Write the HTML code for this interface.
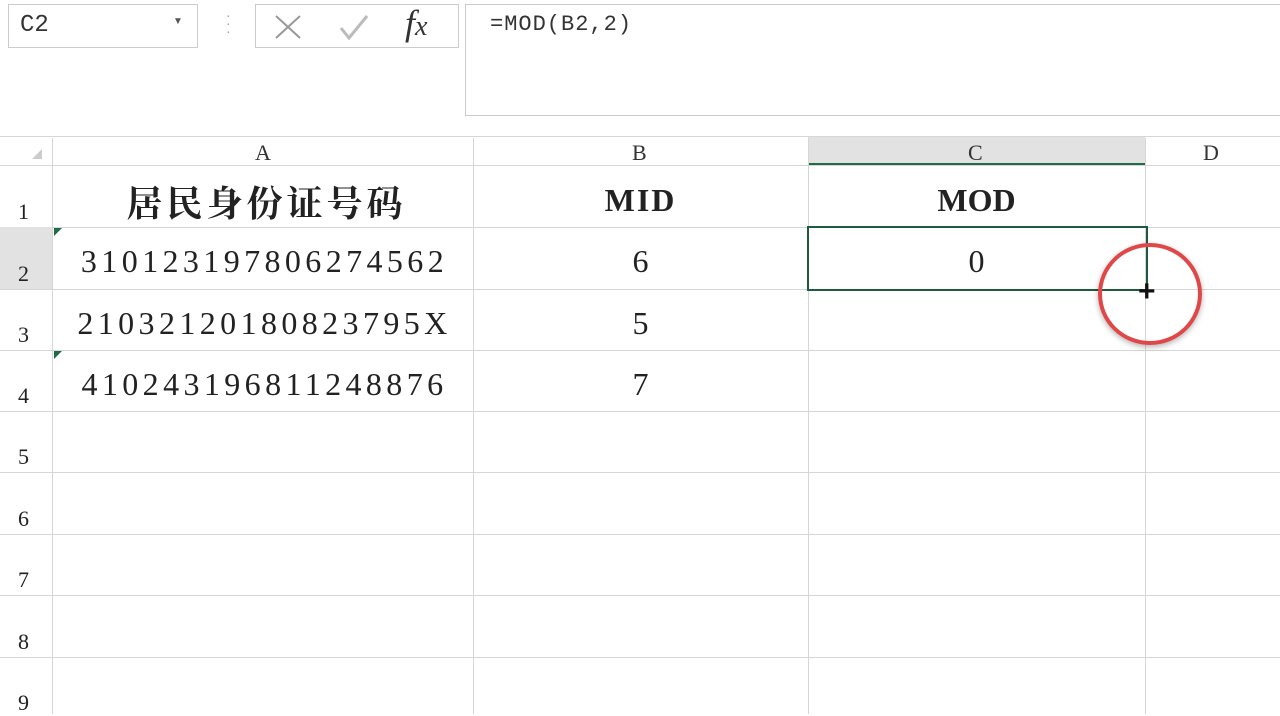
<!DOCTYPE html>
<html><head><meta charset="utf-8"><style>
body{margin:0;width:1280px;height:714px;overflow:hidden;background:#fff;position:relative;font-family:"Liberation Serif","Noto Serif CJK SC",serif;}
.a{position:absolute}
.hl{position:absolute;left:0;width:1280px;height:1px;background:#d6d6d6}
.vl{position:absolute;top:138px;height:576px;width:1px;background:#d6d6d6}
.rn{position:absolute;left:18px;font-size:22px;color:#222}
.c{position:absolute;font-size:32px;color:#222;text-align:center}
.n{letter-spacing:4.4px}
</style></head><body>
<div class="a" style="left:8px;top:4px;width:188px;height:42px;border:1px solid #ccc"></div>
<div class="a" style="left:20px;top:12px;font-family:'Liberation Mono',monospace;font-size:24px;color:#333">C2</div>
<div class="a" style="left:173px;top:16px;font-size:10px;color:#555">▼</div>
<div class="a" style="left:226px;top:14px;font-size:14px;color:#999;line-height:8px">·<br>·<br>·</div>
<div class="a" style="left:255px;top:4px;width:202px;height:42px;border:1px solid #ccc"></div>
<svg class="a" style="left:270px;top:12px" width="40" height="30"><path d="M6 4L30 26M30 4L6 26" stroke="#999" stroke-width="2"/></svg>
<svg class="a" style="left:335px;top:12px" width="40" height="30"><path d="M6 16L14 26L32 4" stroke="#bbb" stroke-width="3" fill="none"/></svg>
<div class="a" style="left:405px;top:2px;font-size:36px;font-style:italic;color:#333">f<span style="font-size:28px">x</span></div>
<div class="a" style="left:465px;top:4px;width:830px;height:110px;border:1px solid #ccc"></div>
<div class="a" style="left:490px;top:12px;font-family:'Liberation Mono',monospace;font-size:22px;color:#333;letter-spacing:1px">=MOD(B2,2)</div>
<div class="a" style="left:808px;top:136px;width:337px;height:29px;background:#e2e2e2"></div>
<div class="a" style="left:808px;top:163px;width:337px;height:2px;background:#1e6b45"></div>
<div class="hl" style="top:136px"></div>
<div class="hl" style="top:165px"></div>
<div class="hl" style="top:227px"></div><div class="hl" style="top:289px"></div><div class="hl" style="top:350px"></div><div class="hl" style="top:411px"></div><div class="hl" style="top:472px"></div><div class="hl" style="top:534px"></div><div class="hl" style="top:595px"></div><div class="hl" style="top:657px"></div>
<div class="vl" style="left:52px"></div><div class="vl" style="left:473px"></div><div class="vl" style="left:808px"></div><div class="vl" style="left:1145px"></div>
<div class="a" style="left:0;top:227px;width:52px;height:62px;background:#e2e2e2"></div>
<div class="a" style="left:32px;top:146px;font-size:10px;color:#ccc">◢</div>
<div class="a" style="left:255px;top:140px;font-size:22px;color:#333">A</div>
<div class="a" style="left:632px;top:140px;font-size:22px;color:#333">B</div>
<div class="a" style="left:968px;top:140px;font-size:22px;color:#333">C</div>
<div class="a" style="left:1203px;top:140px;font-size:22px;color:#333">D</div>
<div class="rn" style="top:199px">1</div><div class="rn" style="top:261px">2</div><div class="rn" style="top:322px">3</div><div class="rn" style="top:383px">4</div><div class="rn" style="top:444px">5</div><div class="rn" style="top:506px">6</div><div class="rn" style="top:567px">7</div><div class="rn" style="top:629px">8</div><div class="rn" style="top:690px">9</div>
<div class="c" style="left:56px;width:421px;top:176px;font-weight:bold;font-family:'Noto Serif CJK SC',serif;font-size:36px;letter-spacing:4px">居民身份证号码</div>
<div class="c" style="left:473px;width:335px;top:182px;font-weight:bold;letter-spacing:2px">MID</div>
<div class="c" style="left:808px;width:337px;top:182px;font-weight:bold">MOD</div>
<div class="c n" style="left:54px;width:421px;top:243px">310123197806274562</div>
<div class="c n" style="left:54px;width:421px;top:305px">21032120180823795X</div>
<div class="c n" style="left:54px;width:421px;top:366px">410243196811248876</div>
<div class="c" style="left:473px;width:335px;top:243px">6</div>
<div class="c" style="left:473px;width:335px;top:305px">5</div>
<div class="c" style="left:473px;width:335px;top:366px">7</div>
<div class="c" style="left:808px;width:337px;top:243px">0</div>
<div class="a" style="left:54px;top:228px;border-top:8px solid #1e6b45;border-right:8px solid transparent"></div>
<div class="a" style="left:54px;top:351px;border-top:8px solid #1e6b45;border-right:8px solid transparent"></div>
<div class="a" style="left:807px;top:226px;width:337px;height:61px;border:2px solid #1e5a3e"></div>
<div class="a" style="left:1098px;top:243px;width:96px;height:94px;border:4px solid #e04848;border-radius:50%;box-shadow:0 2px 6px rgba(0,0,0,.3)"></div>
<div class="a" style="left:1138px;top:279px;font-size:30px;font-weight:bold;font-family:'Liberation Sans',sans-serif;color:#111;line-height:26px">+</div>
</body></html>
